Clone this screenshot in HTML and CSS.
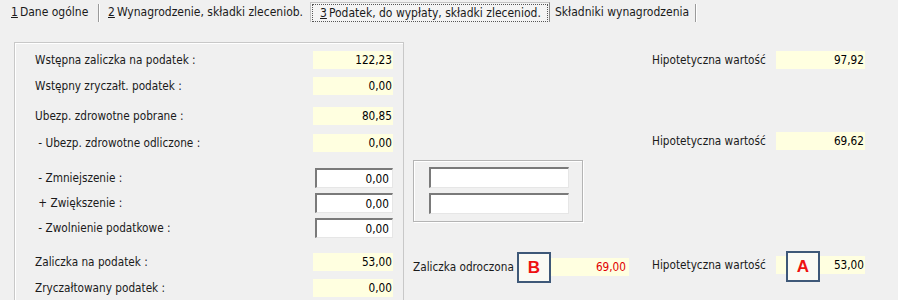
FILE: index.html
```html
<!DOCTYPE html>
<html lang="pl">
<head>
    <meta charset="UTF-8">
    <title>Podatek, do wypłaty</title>
    <link rel="stylesheet" href="styles.css">
</head>
<body>

<div class="tabs">
    <div class="tab t1"><u>1</u>Dane ogólne</div>
    <div class="sep"></div>
    <div class="tab t2"><u>2</u>Wynagrodzenie, składki zleceniob.</div>
    <div class="tab active"><span class="focus"><u>3</u>Podatek, do wypłaty, składki zleceniod.</span></div>
    <div class="tab t4">Składniki wynagrodzenia</div>
    <div class="sep"></div>
</div>

<div class="content">
    <div class="group">
        <div class="row r1"><span class="label">Wstępna zaliczka na podatek :</span><span class="field">122,23</span></div>
        <div class="row r2"><span class="label">Wstępny zryczałt. podatek :</span><span class="field">0,00</span></div>
        <div class="row r3"><span class="label">Ubezp. zdrowotne pobrane :</span><span class="field">80,85</span></div>
        <div class="row r4"><span class="label">&nbsp;- Ubezp. zdrowotne odliczone :</span><span class="field">0,00</span></div>
        <div class="row edit r5"><span class="label">&nbsp;- Zmniejszenie :</span><span class="input">0,00</span></div>
        <div class="row edit r6"><span class="label">&nbsp;+ Zwiększenie :</span><span class="input">0,00</span></div>
        <div class="row edit r7"><span class="label">&nbsp;- Zwolnienie podatkowe :</span><span class="input">0,00</span></div>
        <div class="row r8"><span class="label">Zaliczka na podatek :</span><span class="field">53,00</span></div>
        <div class="row r9"><span class="label">Zryczałtowany podatek :</span><span class="field">0,00</span></div>
    </div>

    <div class="middle">
        <div class="frame">
            <div class="input wide"></div>
            <div class="input wide"></div>
        </div>
        <div class="row odroczona">
            <span class="label">Zaliczka odroczona</span>
            <span class="field red">69,00<span class="mark mark-b">B</span></span>
        </div>
    </div>

    <div class="right">
        <div class="row h1"><span class="label">Hipotetyczna wartość</span><span class="field">97,92</span></div>
        <div class="row h2"><span class="label">Hipotetyczna wartość</span><span class="field">69,62</span></div>
        <div class="row h3"><span class="label">Hipotetyczna wartość</span><span class="field">53,00<span class="mark mark-a">A</span></span></div>
    </div>
</div>

</body>
</html>
```

FILE: styles.css
```css
body {
    margin: 0;
    background-color: #f0f0f0;
    color: #1a1a1a;
    font-family: 'DejaVu Sans Condensed', 'DejaVu Sans', sans-serif;
    font-stretch: condensed;
    font-size: 11.7px;
    width: 898px;
    height: 300px;
    overflow: hidden;
}
.tabs {
    display: flex;
    align-items: stretch;
    height: 22px;
    padding-top: 2px;
    box-sizing: border-box;
    font-size: 12px;
}
.tab {
    display: flex;
    align-items: center;
    white-space: nowrap;
    box-sizing: border-box;
}
.tab u {
    text-decoration: underline;
    margin-right: 2px;
}
.t1 {
    width: 98px;
    padding-left: 11px;
}
.t2 {
    width: 211px;
    padding-left: 9px;
}
.tab.active {
    width: 240px;
    border: 1px solid #c4c4c4;
    border-right-color: #8a8a8a;
    border-bottom: none;
    padding: 1px 1px 0 1px;
    background-color: #f4f4f4;
}
.focus {
    display: flex;
    align-items: center;
    height: 100%;
    width: 100%;
    box-sizing: border-box;
    padding-left: 7px;
    border: 1px dotted #555;
}
.t4 {
    padding: 0 6px 0 5px;
}
.sep {
    width: 1px;
    margin-top: 2px;
    background-color: #9a9a9a;
    box-shadow: 1px 0 0 #fff;
}

.content {
    display: flex;
    align-items: flex-start;
    padding-left: 14px;
    margin-top: 20px;
}
.group {
    width: 390px;
    height: 258px;
    box-sizing: border-box;
    border: 1px solid #c8c8c8;
    border-bottom: none;
    box-shadow: inset 1px 1px 0 #fff;
    padding: 8px 10px 0 20px;
    display: flex;
    flex-direction: column;
}
.row {
    display: flex;
    align-items: center;
    justify-content: space-between;
    height: 18px;
}
.label {
    white-space: nowrap;
}
.field {
    position: relative;
    display: flex;
    align-items: center;
    justify-content: flex-end;
    width: 80px;
    height: 18px;
    box-sizing: border-box;
    padding-right: 1px;
    background-color: #ffffe0;
    color: #000;
}
.input {
    display: flex;
    align-items: center;
    justify-content: flex-end;
    width: 78px;
    height: 20px;
    box-sizing: border-box;
    padding-right: 3px;
    background-color: #fff;
    border-top: 2px solid #7a7a7a;
    border-left: 2px solid #7a7a7a;
    border-right: 1px solid #e6e6e6;
    border-bottom: 1px solid #e6e6e6;
    color: #000;
}
.row.edit {
    height: 20px;
}
.r2 { margin-top: 8px; }
.r3 { margin-top: 12px; }
.r4 { margin-top: 9px; }
.r5 { margin-top: 16px; }
.r6 { margin-top: 5px; }
.r7 { margin-top: 5px; }
.r8 { margin-top: 15px; }
.r9 { margin-top: 8px; }

.middle {
    width: 216px;
    margin-left: 9px;
    margin-top: 118px;
    display: flex;
    flex-direction: column;
}
.frame {
    width: 170px;
    height: 62px;
    box-sizing: border-box;
    border: 1px solid #b4b4b4;
    box-shadow: inset 1px 1px 0 #fff, 1px 1px 0 #fff;
    padding: 6px 0 0 15px;
    display: flex;
    flex-direction: column;
    gap: 5px;
}
.input.wide {
    width: 140px;
    height: 21px;
}
.odroczona {
    margin-top: 36px;
}
.odroczona .field {
    width: 112px;
    padding-right: 3px;
}
.red {
    color: #e00000;
}

.right {
    margin-left: 23px;
    width: 213px;
    display: flex;
    flex-direction: column;
    padding-top: 9px;
}
.right .field {
    width: 89px;
}
.h2 { margin-top: 63px; }
.h3 { margin-top: 106px; }

.mark {
    position: absolute;
    top: -5px;
    width: 34px;
    height: 31px;
    box-sizing: border-box;
    border: 2px solid #3e5878;
    background-color: #fafaf4;
    color: #ee1111;
    font-family: 'Liberation Sans', sans-serif;
    font-weight: bold;
    font-size: 17px;
    display: flex;
    align-items: center;
    justify-content: center;
}
.mark-a {
    left: 10px;
}
.mark-b {
    left: 0;
    top: -6px;
}
```
